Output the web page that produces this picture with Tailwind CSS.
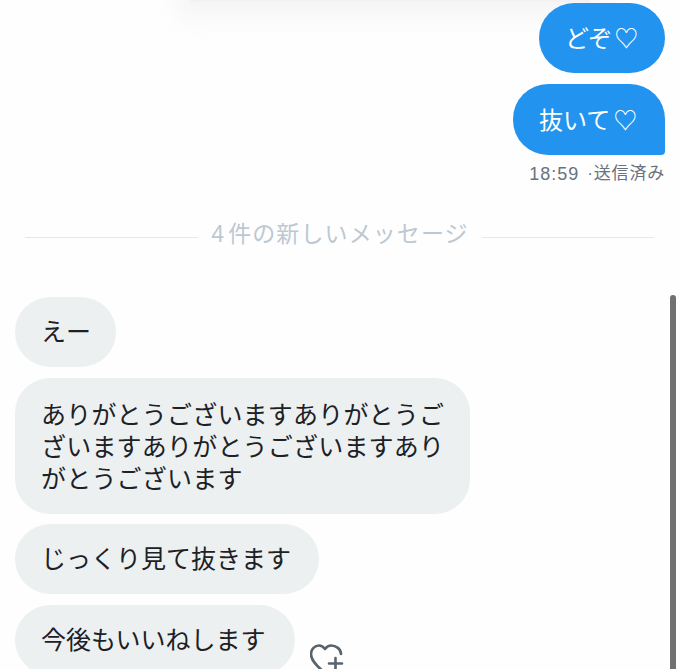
<!DOCTYPE html>
<html lang="ja">
<head>
    <meta charset="UTF-8" />
    <meta name="viewport" content="width=device-width, initial-scale=1.0" />
    <title>メッセージ</title>
    <script src="https://cdn.jsdelivr.net/npm/@tailwindcss/browser@4"></script>
</head>
<body class="bg-white">
<div class="relative w-[680px] h-[669px] overflow-hidden bg-[#fefefe] font-['Liberation_Sans','Noto_Sans_CJK_JP',sans-serif] text-[#1c2126]">
    <!-- 上のぼかし -->
    <div class="absolute -top-[30px] left-[190px] w-[400px] h-[32px] bg-[#f2f2f2] shadow-[0_4px_22px_12px_rgba(232,232,232,0.4)]"></div>

    <!-- 送信メッセージ -->
    <div class="relative flex flex-col items-end gap-[11px] pt-[3px] pr-[15px]">
        <div class="h-[70px] w-[126px] pl-[26px] pt-[2px] flex items-center rounded-[35px] bg-[#2293ee] text-white text-[24px] leading-[32px]">どぞ<span class="ml-[2px]">♡</span></div>
        <div class="h-[71px] w-[152px] pl-[26px] pt-[2px] flex items-center rounded-[35px] rounded-br-[4px] bg-[#2293ee] text-white text-[24px] leading-[32px]">抜いて<span class="ml-[3px]">♡</span></div>
    </div>
    <p class="flex justify-end gap-[8px] pr-[15px] mt-[7px] text-[17px] leading-[24px] text-[#68727c]">
        <span class="text-[18px] tracking-[1px]">18:59</span>
        <span class="tracking-[0.8px]">·送信済み</span>
    </p>

    <!-- 新着の区切り -->
    <div class="relative flex items-center mt-[31px] pl-[25px] pr-[26px] h-[40px]">
        <div class="w-[173px] h-px bg-[#e4e8eb]"></div>
        <div class="flex-1 text-center text-[23px] leading-[32px] tracking-[1.1px] text-[#bcc8d2] -translate-y-[3px]"><span class="mr-[3px]">4</span>件の新しいメッセージ</div>
        <div class="w-[172px] h-px bg-[#e4e8eb]"></div>
    </div>

    <!-- 受信メッセージ -->
    <div class="flex flex-col items-start gap-[11px] mt-[40px] pl-[15px]">
        <div class="h-[70px] w-[101px] pl-[26px] flex items-center rounded-[35px] bg-[#ecf0f1] text-[25px] leading-[32px]">えー</div>
        <div class="h-[136px] w-[455px] pl-[26px] pr-[20px] pt-[2px] flex items-center rounded-[35px] bg-[#ecf0f1] text-[25px] leading-[32px] tracking-[0.2px]">ありがとうございますありがとうございますありがとうございますありがとうございます</div>
        <div class="h-[70px] w-[304px] pl-[26px] flex items-center rounded-[35px] bg-[#ecf0f1] text-[25px] leading-[32px] -mt-px">じっくり見て抜きます</div>
        <div class="flex items-end gap-[15px]">
            <div class="h-[70px] w-[280px] pl-[26px] flex items-center rounded-[35px] bg-[#ecf0f1] text-[25px] leading-[32px]">今後もいいねします</div>
            <svg class="w-[34px] h-[34px] -mb-[3px] text-[#59636c]" viewBox="0 0 34 34" fill="none" stroke="currentColor" stroke-width="2.6" stroke-linecap="round" stroke-linejoin="round">
                <path d="M14 28 C8 23 1 17 1 10 C1 5 5 1.500 9 1.500 C11.500 1.500 13.500 3 15 5 C16.500 3 18.500 1.500 21 1.500 C26 1.500 31 5 31 10"/>
                <path d="M25.500 14 V32 M19 19.500 H32"/>
            </svg>
        </div>
    </div>

    <!-- スクロールバー -->
    <div class="absolute top-[295px] left-[670px] w-[6px] h-[380px] rounded-full bg-[#6f7173]"></div>
</div>
</body>
</html>
